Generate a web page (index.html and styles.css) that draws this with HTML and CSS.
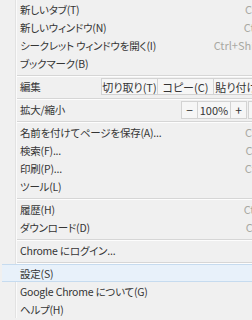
FILE: index.html
```html
<!DOCTYPE html>
<html lang="ja">
<head>
    <meta charset="UTF-8">
    <meta name="viewport" content="width=device-width, initial-scale=1.0">
    <title>Chrome メニュー</title>
    <link rel="stylesheet" href="styles.css">
</head>
<body>

<div class="menu">
    <div class="item"><span class="label">新しいタブ(T)</span><span class="key">Ctrl+T</span></div>
    <div class="item"><span class="label">新しいウィンドウ(N)</span><span class="key">Ctrl+N</span></div>
    <div class="item"><span class="label">シークレット ウィンドウを開く(I)</span><span class="key">Ctrl+Shift+N</span></div>
    <div class="item"><span class="label">ブックマーク(B)</span></div>
    <div class="sep"></div>

    <div class="item tools-row">
        <span class="label row-name">編集</span>
        <div class="btn-group">
            <span class="btn cut">切り取り(T)</span>
            <span class="btn copy">コピー(C)</span>
            <span class="btn paste">貼り付け(P)</span>
        </div>
    </div>
    <div class="sep"></div>

    <div class="item tools-row">
        <span class="label row-name zoom-name">拡大/縮小</span>
        <div class="zoom-group">
            <span class="btn zoom-btn">−</span>
            <span class="zoom-value">100%</span>
            <span class="btn zoom-btn">+</span>
        </div>
        <span class="btn full-btn"></span>
    </div>
    <div class="sep"></div>

    <div class="item"><span class="label">名前を付けてページを保存(A)...</span><span class="key">Ctrl+S</span></div>
    <div class="item"><span class="label">検索(F)...</span><span class="key">Ctrl+F</span></div>
    <div class="item"><span class="label">印刷(P)...</span><span class="key">Ctrl+P</span></div>
    <div class="item"><span class="label">ツール(L)</span></div>
    <div class="sep"></div>

    <div class="item"><span class="label">履歴(H)</span><span class="key">Ctrl+H</span></div>
    <div class="item"><span class="label">ダウンロード(D)</span><span class="key">Ctrl+J</span></div>
    <div class="sep"></div>

    <div class="item"><span class="label">Chrome にログイン...</span></div>
    <div class="sep"></div>

    <div class="item active"><span class="label">設定(S)</span></div>
    <div class="item"><span class="label">Google Chrome について(G)</span></div>
    <div class="item"><span class="label">ヘルプ(H)</span></div>
</div>

</body>
</html>
```

FILE: styles.css
```css
/* Base */
* {
    box-sizing: border-box;
    margin: 0;
    padding: 0;
}
body {
    background-color: #f0f0f0;
    font-family: "Noto Sans CJK JP", "Noto Sans", sans-serif;
    font-size: 10.5px;
    font-feature-settings: "palt";
    color: #353535;
    overflow: hidden;
}

/* Menu */
.menu {
    position: relative;
    width: 300px;
}
.menu::before {
    content: "";
    position: absolute;
    top: 0;
    bottom: 0;
    left: 15px;
    width: 1px;
    background-color: #e2e2e2;
    border-right: 1px solid #fafafa;
    box-sizing: content-box;
}

.item {
    position: relative;
    display: flex;
    align-items: center;
    height: 18px;
    padding: 0 24px 0 20px;
    white-space: nowrap;
}
.item .label {
    flex: 1;
    letter-spacing: -0.2px;
}
.item .key {
    flex: none;
    font-size: 11px;
    color: #a9a9a3;
}

.item.active {
    margin-left: 2px;
    padding-left: 18px;
    background-color: #e8f1fa;
    border-top: 1px solid #c6dbef;
    border-bottom: 1px solid #c6dbef;
}

/* Separator */
.sep {
    height: 5px;
    margin-left: 16px;
    padding-top: 3px;
}
.sep::after {
    content: "";
    display: block;
    height: 1px;
    background-color: #d6d6d6;
    border-bottom: 1px solid #fdfdfd;
    box-sizing: content-box;
}

/* Edit / zoom rows */
.tools-row {
    padding-right: 0;
}
.item .row-name {
    flex: none;
    width: 81px;
}
.item .zoom-name {
    width: 161px;
}
.btn-group,
.zoom-group {
    flex: none;
    display: flex;
    margin-top: 1px;
}
.btn {
    flex: none;
    display: flex;
    align-items: center;
    justify-content: center;
    height: 17px;
    font-size: 11px;
    background-color: #f6f6f6;
    border: 1px solid #d3d3d3;
}
.btn-group .btn + .btn {
    border-left: none;
}
.cut {
    width: 57px;
}
.copy {
    width: 56px;
}
.paste {
    width: 60px;
}

.zoom-btn {
    width: 17px;
    height: 18px;
    font-size: 12px;
}
.zoom-value {
    flex: none;
    display: flex;
    align-items: center;
    justify-content: center;
    width: 32px;
    height: 18px;
    font-size: 11px;
    border-top: 1px solid #d3d3d3;
    border-bottom: 1px solid #d3d3d3;
    background-color: #f6f6f6;
}
.full-btn {
    width: 20px;
    height: 18px;
    margin-top: 1px;
    margin-left: 1px;
}
```
